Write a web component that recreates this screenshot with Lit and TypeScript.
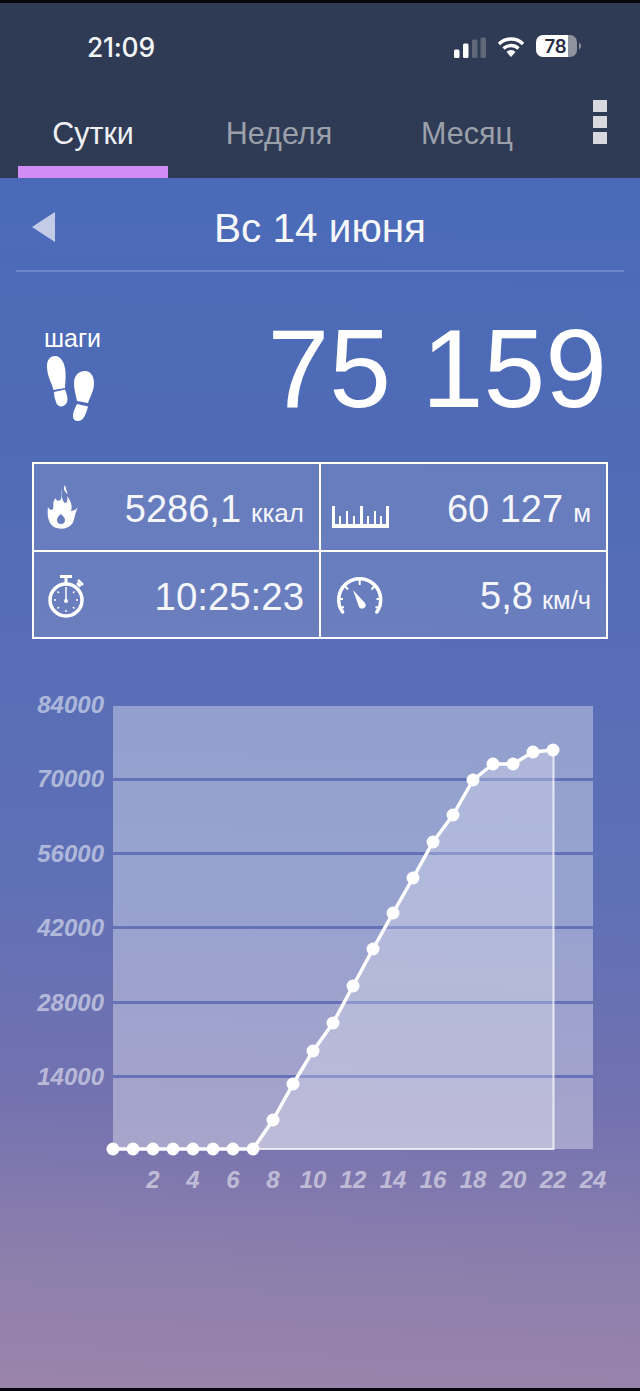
import { LitElement, html, css, svg } from "lit";
import { customElement } from "lit/decorators.js";

const YS = [1149,1149,1149,1149,1149,1149,1149,1149,1120,1084,1051,1023,986,949,913,878,842,815,780,764,764,752,750];
const X0 = 113, DX = 20, TOP = 706, BASE = 1149, OFFSET = 690;
const pts = YS.map((y, i) => [X0 + DX * i, y - OFFSET]);
const line = pts.map((p) => p.join(",")).join(" ");
const area = `${line} ${pts[22][0]},${BASE - OFFSET} ${X0},${BASE - OFFSET}`;

const RULER: [number, number][] = [
  [0, 1], [7, 11], [14, 6], [21, 11], [28, 1], [35, 11], [42, 6], [48, 11], [54, 1],
];

@customElement("app-root")
export class AppRoot extends LitElement {
  static styles = css`
    :host { display: block; width: 640px; height: 1391px; overflow: hidden; font-family: "Liberation Sans", Arial, sans-serif; color: #fff;
      background: #05070c; }
    .top { height: 175px; margin-top: 3px; background: #2f3a55; display: flex; flex-direction: column; }
    .status { height: 83px; display: flex; align-items: center; justify-content: space-between; padding: 5px 59px 0 87px; box-sizing: border-box; flex: none; }
    .time { font-family: Inter, sans-serif; font-weight: 500; font-size: 26.4px; letter-spacing: -0.2px; color: #f4f5f7; }
    .sys { display: flex; align-items: center; gap: 11px; }
    .batt { margin-top: -2px; }
    .tabs { display: flex; height: 92px; padding-left: 18px; position: relative; }
    .tab { width: 150px; text-align: center; font-size: 30.5px; color: #9ba0aa; padding-top: 30px; box-sizing: border-box; margin-right: 36px; }
    .tab.on { color: #eef0f4; border-bottom: 12px solid #d28cf6; }
    .tab.m { margin-right: 0; margin-left: 2px; }
    .dots { position: absolute; right: 33px; top: 14px; display: flex; flex-direction: column; gap: 4px; }
    .dots i { display: block; width: 14px; height: 12px; background: #d8d9de; }
    .main { height: 1210px; background: linear-gradient(182deg, #4a6ab8 0%, #4f6bb6 20%, #5f70b6 58%, #7372b0 76%, #8e7fac 90%, #9a84ac 100%); display: flex; flex-direction: column; }
    .date { height: 84px; padding-top: 8px; margin: 0 16px; border-bottom: 2px solid #6f88ca; display: flex; align-items: center; justify-content: center; position: relative; font-size: 40.5px; color: #f6f7fb; }
    .back { position: absolute; left: 16px; top: 34px; width: 0; height: 0; border-top: 15px solid transparent; border-bottom: 15px solid transparent; border-right: 23px solid #c3cce6; }
    .steps { display: flex; justify-content: space-between; height: 190px; padding: 0 33px 0 44px; align-items: flex-start; }
    .lbl { font-size: 25px; margin-top: 53px; line-height: 27px; }
    .foot { display: block; margin-top: 3px; }
    .big { font-size: 111px; line-height: 128px; margin-top: 33px; }
    .grid { margin: 0 32px; display: grid; grid-template-columns: 287px 1fr; grid-template-rows: 88px 1fr; border: 2px solid #fff; background: rgba(255,255,255,.12); box-sizing: border-box; height: 177px; }
    .cell { display: flex; align-items: center; justify-content: space-between; padding: 0 15px 0 11px; }
    .cell.l { border-right: 2px solid #fff; padding-left: 13px; }
    .cell.t { border-bottom: 2px solid #fff; }
    .v { font-size: 38px; white-space: nowrap; color: #f5f6fb; margin-top: 4px; }
    .v small { font-size: 26px; margin-left: 10px; }
    .v.sp { font-size: 38.4px; }
    .v.kmh small { font-size: 25.5px; margin-left: 9px; }
    .ruler { margin-top: 18px; }
    .low { margin-top: 4px; }
    .chart { display: block; margin-top: 51px; }
    .ax { font: italic bold 24px "Liberation Sans", Arial, sans-serif; fill: #fff; fill-opacity: .52; }
  `;

  chart() {
    const o = OFFSET;
    return html`<svg class="chart" width="640" height="520" viewBox="0 0 640 520">
      <rect x="113" y=${TOP - o} width="480" height=${BASE - TOP} fill="#fff" fill-opacity=".35"/>
      ${[779, 853, 927, 1002, 1076].map((y) => svg`<rect x="113" y=${y - 1 - o} width="480" height="3" fill="#5a6ab4" fill-opacity=".85"/>`)}
      ${[84000, 70000, 56000, 42000, 28000, 14000].map((v, i) => svg`<text class="ax" x="104" y=${713 + i * 74.4 - o} text-anchor="end">${v}</text>`)}
      ${[2,4,6,8,10,12,14,16,18,20,22,24].map((v) => svg`<text class="ax" x=${X0 + DX * v} y=${1188 - o} text-anchor="middle">${v}</text>`)}
      <polygon points=${area} fill="#fff" fill-opacity=".25"/>
      <path d="M253 ${BASE - o} H553.500 V${750 - o}" fill="none" stroke="#fff" stroke-opacity=".75" stroke-width="2"/>
      <polyline points=${line} fill="none" stroke="#fff" stroke-width="3.5" stroke-linejoin="round"/>
      ${pts.map((p) => svg`<circle cx=${p[0]} cy=${p[1]} r="6.5" fill="#fff"/>`)}
    </svg>`;
  }

  render() {
    return html`
      <div class="top">
        <div class="status">
          <span class="time">21:09</span>
          <div class="sys">
            <svg width="32" height="21" viewBox="0 0 32 21">
              <rect x="0" y="12.500" width="5.500" height="8.500" rx="1.500" fill="#fff"/>
              <rect x="9" y="6.500" width="5.500" height="14.500" rx="1.500" fill="#fff"/>
              <rect x="18" y="2.500" width="5.500" height="18.500" rx="1.500" fill="#5f6779"/>
              <rect x="26.500" y="0.500" width="5.500" height="20.500" rx="1.500" fill="#5f6779"/>
            </svg>
            <svg width="28" height="22" viewBox="0 0 28 22">
              <path d="M2 8 A17 17 0 0 1 26 8" fill="none" stroke="#fff" stroke-width="3.4"/>
              <path d="M6.500 12.500 A11 11 0 0 1 21.500 12.500" fill="none" stroke="#fff" stroke-width="3.4"/>
              <path d="M14 21 L9.500 16 A6 6 0 0 1 18.500 16 Z" fill="#fff"/>
            </svg>
            <svg class="batt" width="45" height="24" viewBox="0 0 45 24">
              <defs><clipPath id="b"><rect x="0" y="1" width="41" height="22" rx="7"/></clipPath></defs>
              <g clip-path="url(#b)"><rect x="0" y="0" width="32" height="24" fill="#fff"/><rect x="32" y="0" width="10" height="24" fill="#8f939d"/></g>
              <path d="M43 8.500 A4 4 0 0 1 43 15.500 Z" fill="#8f939d"/>
              <text x="19.500" y="19" text-anchor="middle" font-family="Inter, sans-serif" font-weight="600" font-size="18.500" fill="#252c42">78</text>
            </svg>
          </div>
        </div>
        <div class="tabs">
          <div class="tab on">Сутки</div>
          <div class="tab">Неделя</div>
          <div class="tab m">Месяц</div>
          <div class="dots"><i></i><i></i><i></i></div>
        </div>
      </div>
      <div class="main">
        <div class="date"><span class="back"></span>Вс 14 июня</div>
        <div class="steps">
          <div>
            <div class="lbl">шаги</div>
            <svg class="foot" width="52" height="68" viewBox="0 0 52 68" fill="#fff">
              <path d="M3 11 C3 4 7 1 11 1 C17 1 21 8 21.500 17 C22 24 21 29 21 33 L9.500 35 C8 28 3 22 3 11 Z"/>
              <path d="M10 37 L21 34.500 C23 40 25 45 22 49 C19 53 13 52 12 47 C11 44 10 41 10 37 Z"/>
              <path d="M30 28 C30 21 34 16 41 16 C47 16 50 22 50 28 C50 36 46 42 44 48 L33 46 C32 40 30 35 30 28 Z"/>
              <path d="M33 49 L44 51.500 C42 60 39 66 34 66 C28 66 27 60 33 49 Z"/>
            </svg>
          </div>
          <div class="big">75 159</div>
        </div>
        <div class="grid">
          <div class="cell l t">
            <svg width="34" height="45" viewBox="0 0 34 45" fill="#fff">
              <path d="M18 0 C16 3 17 7 21 9 C19 6 19 3 18 0 Z"/>
              <path fill-rule="evenodd" d="M15 4 C13 9 16 12 13 15 C11 17 9 15 8.500 13 C5 18 7 20 6 24 C4 26 2 24 1 22 C0 30 1 38 7 42 C13 45 21 44 25 39 C28 35 27 30 31 22 C29 25 26 26 24 26 C26 20 23 15 20 11 C21 15 20 18 18 18 C15 16 14 9 15 4 Z M14 29 C11 31 10 33 10 35 C10 38 12 39 14 39 C17 39 18 37 18 35 C18 33 16 31 14 29 Z"/>
            </svg>
            <span class="v">5286,1<small>ккал</small></span>
          </div>
          <div class="cell t">
            <svg class="ruler" width="57" height="23" viewBox="0 0 57 23" fill="#fff">
              <rect x="0" y="19" width="57" height="4"/>
              ${RULER.map(([x, y]) => svg`<rect x=${x} y=${y} width=${y === 1 ? 3 : 2} height=${20 - y}/>`)}
            </svg>
            <span class="v">60 127<small>м</small></span>
          </div>
          <div class="cell l">
            <svg class="low" width="40" height="44" viewBox="0 0 40 44" fill="none" stroke="#fff">
              <circle cx="19" cy="25" r="16" stroke-width="3.500"/>
              <path d="M19 1 V9 M13 1.500 H25" stroke-width="3"/>
              <path d="M30 8 L33.500 11.500 M31 5 L36 10" stroke-width="2.500"/>
              <path d="M19 12 V25" stroke-width="1.500"/>
              <circle cx="19" cy="26" r="2" fill="#fff" stroke="none"/>
              <path d="M19 35 V37 M7 25 H9 M29 25 H31 M10.500 16.500 L12 18 M27.500 16.500 L26 18 M10.500 33.500 L12 32 M27.500 33.500 L26 32" stroke-width="1.500"/>
            </svg>
            <span class="v sp">10:25:23</span>
          </div>
          <div class="cell">
            <svg class="low" width="56" height="40" viewBox="0 0 56 40" fill="none" stroke="#fff" stroke-width="3.500">
              <path d="M10.600 35 A21 21 0 1 1 44.800 35" stroke-linecap="round"/>
              <path d="M27.700 3 V8 M13 9 L16 12.500 M42.500 9 L39.500 12.500 M7 22 H11 M48.500 22 H44.500 M8 31 L12 30 M47.500 31 L43.500 30" stroke-width="2"/>
              <path d="M21 13 L33 26 A3.500 3.500 0 0 1 27 30 Z" fill="#fff" stroke="none"/>
            </svg>
            <span class="v kmh">5,8<small>км/ч</small></span>
          </div>
        </div>
        ${this.chart()}
      </div>
    `;
  }
}
